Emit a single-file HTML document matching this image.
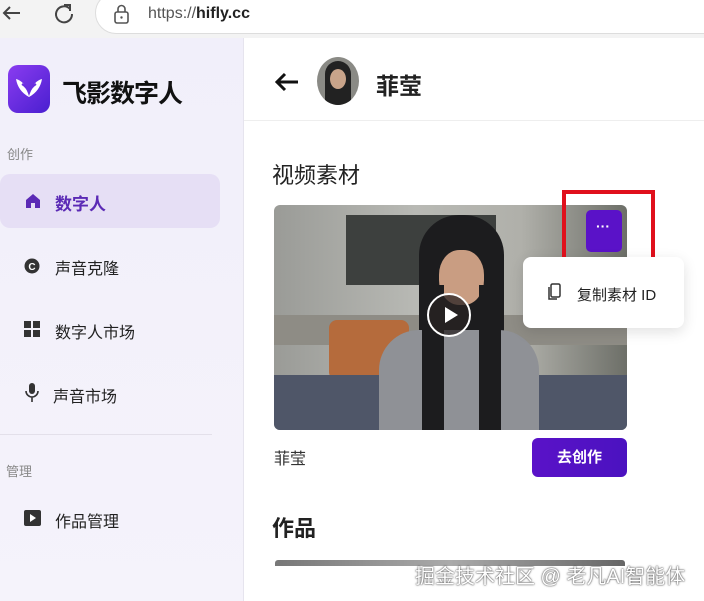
<!DOCTYPE html><html><head><meta charset="utf-8"><style>
*{margin:0;padding:0;box-sizing:border-box}
body{width:704px;height:601px;overflow:hidden;background:#fff;font-family:"Liberation Sans","Noto Sans CJK SC",sans-serif;position:relative;color:#222}
.a{position:absolute}
</style></head><body>
<div class="a" style="left:0;top:0;width:704px;height:38px;background:#f3f3f3"></div>
<div class="a" style="left:95px;top:-8px;width:640px;height:42px;background:#fff;border:1px solid #ddd;border-radius:21px"></div>
<svg class="a" style="left:0;top:0" width="100" height="34"><path d="M20 13H4M10 7L4 13l6 6" stroke="#444" stroke-width="2" fill="none"/><path d="M70 9a8 8 0 1 0 2 5M64 5h6v6" stroke="#444" stroke-width="2" fill="none"/></svg>
<svg class="a" style="left:113px;top:4px" width="18" height="22"><rect x="2" y="8" width="13" height="11" rx="2" stroke="#555" stroke-width="1.6" fill="none"/><path d="M5 8V5a3.5 3.5 0 0 1 7 0v3" stroke="#555" stroke-width="1.6" fill="none"/><circle cx="8.5" cy="13.5" r="1.2" fill="#555"/></svg>
<div class="a" style="left:148px;top:5px;font-size:16px;color:#555">https://<b style="color:#222">hifly.cc</b></div>
<div class="a" style="left:0;top:38px;width:243px;height:563px;background:linear-gradient(#f1effa,#f5f3fb)"></div>
<div class="a" style="left:243px;top:38px;width:1px;height:563px;background:#e6e4ee"></div>
<div class="a" style="left:8px;top:65px;width:42px;height:48px;border-radius:10px;background:linear-gradient(135deg,#8a3cf0,#4a1fd0)"></div>
<svg class="a" style="left:14px;top:75px" width="30" height="26"><path d="M2 4q8 2 13 14q5-12 13-14q-2 12-13 18q-11-6-13-18z" fill="#fff"/><path d="M8 9q5 3 7 9q2-6 7-9" stroke="#6a2ee0" stroke-width="2" fill="none"/></svg>
<div class="a" style="left:62px;top:74px;font-size:25px;font-weight:bold;color:#111;letter-spacing:-1px">飞影数字人</div>
<div class="a" style="left:7px;top:144px;font-size:13px;color:#888">创作</div>
<div class="a" style="left:0;top:174px;width:220px;height:54px;border-radius:10px;background:#e6dff5"></div>
<svg class="a" style="left:25px;top:193px" width="16" height="16"><path d="M1 7L8 1l7 6v8H1z" fill="#5b2ab5"/><rect x="6" y="10" width="4" height="5" fill="#e6dff5"/></svg>
<div class="a" style="left:55px;top:190px;font-size:17px;font-weight:bold;color:#5b2ab5">数字人</div>
<svg class="a" style="left:24px;top:258px" width="16" height="16"><circle cx="8" cy="8" r="7.5" fill="#333"/><text x="8" y="12" font-size="10" font-weight="bold" fill="#fff" text-anchor="middle" font-family="Liberation Sans">C</text></svg>
<div class="a" style="left:55px;top:255px;font-size:16px;color:#222">声音克隆</div>
<svg class="a" style="left:24px;top:321px" width="16" height="16"><rect x="0" y="0" width="7" height="7" fill="#333"/><rect x="9" y="0" width="7" height="7" fill="#333"/><rect x="0" y="9" width="7" height="7" fill="#333"/><rect x="9" y="9" width="7" height="7" fill="#333"/></svg>
<div class="a" style="left:55px;top:319px;font-size:16px;color:#222">数字人市场</div>
<svg class="a" style="left:25px;top:383px" width="14" height="20"><rect x="4" y="0" width="6" height="11" rx="3" fill="#333"/><path d="M1 8a6 6 0 0 0 12 0M7 14v5" stroke="#333" stroke-width="1.6" fill="none"/></svg>
<div class="a" style="left:53px;top:383px;font-size:16px;color:#222">声音市场</div>
<div class="a" style="left:0;top:434px;width:212px;height:1px;background:#e3e0ea"></div>
<div class="a" style="left:6px;top:461px;font-size:13px;color:#888">管理</div>
<svg class="a" style="left:24px;top:510px" width="18" height="16"><rect x="0" y="0" width="17" height="16" rx="2" fill="#333"/><path d="M6 4l6 4-6 4z" fill="#fff"/></svg>
<div class="a" style="left:55px;top:508px;font-size:16px;color:#222">作品管理</div>
<div class="a" style="left:244px;top:120px;width:460px;height:1px;background:#eee"></div>
<svg class="a" style="left:273px;top:70px" width="28" height="24"><path d="M25 12H4M12 4l-8 8 8 8" stroke="#111" stroke-width="3" fill="none"/></svg>
<div class="a" style="left:317px;top:57px;width:42px;height:48px;border-radius:50%;overflow:hidden;background:#8a8a85">
 <div class="a" style="left:8px;top:4px;width:26px;height:44px;border-radius:13px 13px 0 0;background:#222"></div>
 <div class="a" style="left:13px;top:12px;width:16px;height:20px;border-radius:50%;background:#c9a48a"></div>
</div>
<div class="a" style="left:376px;top:67px;font-size:23px;font-weight:bold;color:#222">菲莹</div>
<div class="a" style="left:272px;top:158px;font-size:22px;color:#222">视频素材</div>
<div class="a" style="left:274px;top:205px;width:353px;height:225px;border-radius:6px;overflow:hidden;background:linear-gradient(90deg,#9a9b97,#b8b9b4 40%,#b0b0aa 70%,#6d6f68)">
 <div class="a" style="left:72px;top:10px;width:150px;height:70px;background:#3d403e"></div>
 <div class="a" style="left:0;top:110px;width:353px;height:30px;background:#8e8c85"></div>
 <div class="a" style="left:55px;top:115px;width:80px;height:60px;background:#b56b3c;border-radius:8px"></div>
 <div class="a" style="left:0;top:170px;width:353px;height:55px;background:#4f5668"></div>
 <div class="a" style="left:145px;top:10px;width:85px;height:215px;background:#1c1c1e;border-radius:40px 40px 0 0"></div>
 <div class="a" style="left:165px;top:45px;width:45px;height:55px;background:#c99d82;border-radius:45%"></div>
 <div class="a" style="left:105px;top:125px;width:160px;height:100px;background:#8f9196;border-radius:40px 40px 0 0"></div>
 <div class="a" style="left:148px;top:80px;width:22px;height:145px;background:#1c1c1e"></div>
 <div class="a" style="left:205px;top:80px;width:22px;height:145px;background:#1c1c1e"></div>
 <div class="a" style="left:153px;top:88px;width:44px;height:44px;border-radius:50%;border:2px solid #fff;background:rgba(40,35,35,.75)"></div>
 <svg class="a" style="left:168px;top:101px" width="18" height="18"><path d="M3 1l13 8-13 8z" fill="#fff"/></svg>
</div>
<div class="a" style="left:586px;top:210px;width:36px;height:42px;border-radius:5px;background:#5a12c8"></div>
<div class="a" style="left:596px;top:218px;color:#fff;font-size:14px;font-weight:bold">···</div>
<div class="a" style="left:562px;top:190px;width:93px;height:77px;border:4px solid #e0101c"></div>
<div class="a" style="left:523px;top:257px;width:161px;height:71px;background:#fff;border-radius:8px;box-shadow:0 4px 14px rgba(0,0,0,.12)"></div>
<svg class="a" style="left:548px;top:283px" width="14" height="18"><rect x="3" y="1" width="9" height="13" rx="1.5" stroke="#333" stroke-width="1.5" fill="none"/><path d="M1 4v12h8" stroke="#333" stroke-width="1.5" fill="none"/></svg>
<div class="a" style="left:577px;top:284px;font-size:15px;color:#222">复制素材 ID</div>
<div class="a" style="left:274px;top:445px;font-size:16px;color:#333">菲莹</div>
<div class="a" style="left:532px;top:438px;width:95px;height:39px;border-radius:6px;background:linear-gradient(90deg,#5a12c8,#4b12c0);color:#fff;font-size:15px;font-weight:bold;text-align:center;line-height:39px">去创作</div>
<div class="a" style="left:272px;top:511px;font-size:22px;font-weight:bold;color:#222">作品</div>
<div class="a" style="left:275px;top:560px;width:350px;height:6px;border-radius:3px 3px 0 0;background:linear-gradient(90deg,#777,#aaa,#666)"></div>
<div class="a" style="left:415px;top:560px;font-size:20px;color:#fff;text-shadow:0 0 2px #555,0 0 1px #333">掘金技术社区 @ 老凡AI智能体</div>
</body></html>
